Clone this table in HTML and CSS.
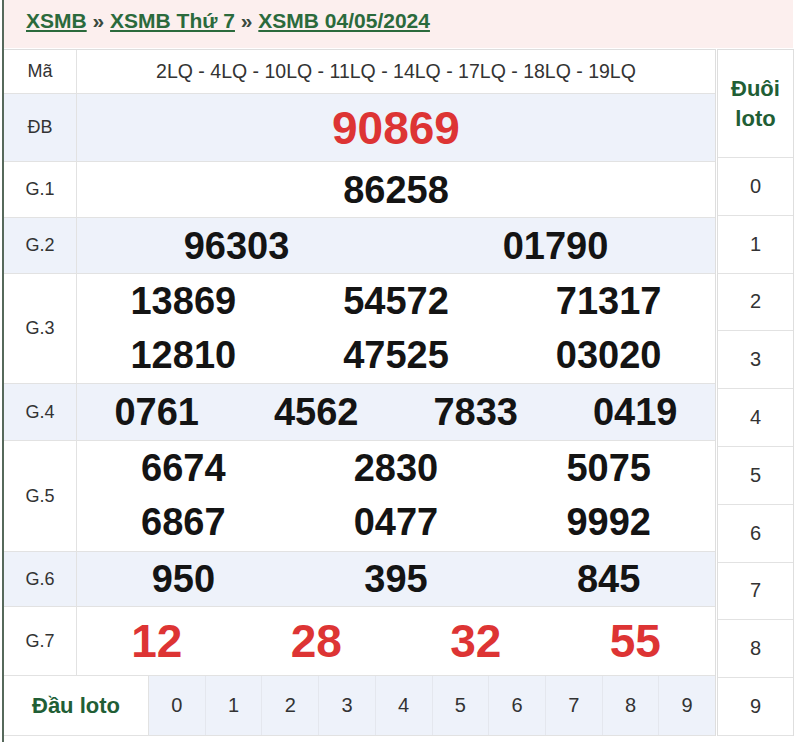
FILE: index.html
```html
<!DOCTYPE html>
<html lang="vi">
<head>
<meta charset="utf-8">
<title>XSMB 04/05/2024</title>
<link rel="stylesheet" href="styles.css">
</head>
<body>
<div class="page">
  <div class="crumb">
    <a href="#">XSMB</a> <span class="sep">»</span> <a href="#">XSMB Thứ 7</a> <span class="sep">»</span> <a href="#">XSMB 04/05/2024</a>
  </div>
  <div class="board">
    <div class="main">
      <div class="row r-ma">
        <div class="lbl">Mã</div>
        <div class="val code">2LQ - 4LQ - 10LQ - 11LQ - 14LQ - 17LQ - 18LQ - 19LQ</div>
      </div>
      <div class="row alt r-db">
        <div class="lbl">ĐB</div>
        <div class="val c1"><span class="num red">90869</span></div>
      </div>
      <div class="row r-g1">
        <div class="lbl">G.1</div>
        <div class="val c1"><span class="num">86258</span></div>
      </div>
      <div class="row alt r-g2">
        <div class="lbl">G.2</div>
        <div class="val c2"><span class="num">96303</span><span class="num">01790</span></div>
      </div>
      <div class="row r-g3">
        <div class="lbl">G.3</div>
        <div class="val c3">
          <span class="num">13869</span><span class="num">54572</span><span class="num">71317</span>
          <span class="num">12810</span><span class="num">47525</span><span class="num">03020</span>
        </div>
      </div>
      <div class="row alt r-g4">
        <div class="lbl">G.4</div>
        <div class="val c4"><span class="num">0761</span><span class="num">4562</span><span class="num">7833</span><span class="num">0419</span></div>
      </div>
      <div class="row r-g5">
        <div class="lbl">G.5</div>
        <div class="val c3">
          <span class="num">6674</span><span class="num">2830</span><span class="num">5075</span>
          <span class="num">6867</span><span class="num">0477</span><span class="num">9992</span>
        </div>
      </div>
      <div class="row alt r-g6">
        <div class="lbl">G.6</div>
        <div class="val c3"><span class="num">950</span><span class="num">395</span><span class="num">845</span></div>
      </div>
      <div class="row r-g7">
        <div class="lbl">G.7</div>
        <div class="val c4"><span class="num red">12</span><span class="num red">28</span><span class="num red">32</span><span class="num red">55</span></div>
      </div>
      <div class="row r-dau">
        <div class="dlbl">Đầu loto</div>
        <div class="dcell">0</div><div class="dcell">1</div><div class="dcell">2</div><div class="dcell">3</div><div class="dcell">4</div>
        <div class="dcell">5</div><div class="dcell">6</div><div class="dcell">7</div><div class="dcell">8</div><div class="dcell">9</div>
      </div>
    </div>
    <div class="side">
      <div class="shead">Đuôi<br>loto</div>
      <div class="scell">0</div><div class="scell">1</div><div class="scell">2</div><div class="scell">3</div><div class="scell">4</div>
      <div class="scell">5</div><div class="scell">6</div><div class="scell">7</div><div class="scell">8</div><div class="scell">9</div>
    </div>
  </div>
</div>
</body>
</html>
```
FILE: styles.css
```css
* { box-sizing: border-box; }
html, body { margin: 0; padding: 0; background: #ffffff; }
body { font-family: "Liberation Sans", Arial, sans-serif; color: #333; }

.page {
  margin-left: 2px;
  width: 792px;
  height: 742px;
  border-left: 2px solid #56695b;
}

.crumb {
  height: 48px;
  width: 789px;
  background: #fcefee;
  padding-left: 22px;
  line-height: 41px;
  font-size: 21px;
  font-weight: bold;
  white-space: nowrap;
}
.crumb a { color: #2b6a3c; text-decoration: underline; text-underline-offset: 2px; }
.crumb .sep { color: #3a4a3e; }

.board {
  margin-top: 1px;
  display: flex;
  align-items: stretch;
}

.main {
  width: 712px;
  border-top: 1px solid #dedede;
  border-right: 1px solid #dedede;
}

.row {
  display: flex;
  border-bottom: 1px solid #e2e2e2;
  background: #ffffff;
}
.row.alt { background: #eef2fa; }

.lbl {
  width: 73px;
  flex: none;
  border-right: 1px solid #e2e2e2;
  display: flex;
  align-items: center;
  justify-content: center;
  font-size: 18px;
  color: #333;
}

.val {
  flex: 1;
  display: grid;
  align-items: center;
  justify-items: center;
}
.code { font-size: 19.5px; color: #333; }
.c1 { grid-template-columns: 1fr; }
.c2 { grid-template-columns: 1fr 1fr; }
.c3 { grid-template-columns: 1fr 1fr 1fr; }
.c4 { grid-template-columns: 1fr 1fr 1fr 1fr; }

.num {
  font-size: 38px;
  font-weight: bold;
  color: #141414;
  line-height: 1;
}
.num.red { color: #dd3434; font-size: 46px; }

.r-ma { height: 44px; }
.r-db { height: 68px; }
.r-g1 { height: 56px; }
.r-g2 { height: 56px; }
.r-g3 { height: 110px; }
.r-g4 { height: 57px; }
.r-g5 { height: 111px; }
.r-g6 { height: 55px; }
.r-g7 { height: 69px; }
.r-dau { height: 60px; }

.r-g3 .val, .r-g5 .val { grid-template-rows: 54px 54px; }

.dlbl {
  width: 145px;
  flex: none;
  border-right: 1px solid #e2e2e2;
  display: flex;
  align-items: center;
  justify-content: center;
  font-size: 22px;
  font-weight: bold;
  color: #215e35;
}
.dcell {
  flex: 1;
  background: #eef2fa;
  border-right: 1px solid #e4e7ee;
  display: flex;
  align-items: center;
  justify-content: center;
  font-size: 20px;
  color: #333;
}
.dcell:last-child { border-right: none; }

.side {
  width: 77px;
  margin-left: 1px;
  display: flex;
  flex-direction: column;
  border-top: 1px solid #dedede;
  border-left: 1px solid #dedede;
  border-right: 1px solid #dedede;
}
.shead {
  height: 108px;
  flex: none;
  display: flex;
  align-items: center;
  justify-content: center;
  text-align: center;
  font-size: 22px;
  line-height: 30px;
  font-weight: bold;
  color: #215e35;
  border-bottom: 1px solid #e2e2e2;
}
.scell {
  flex: 1;
  display: flex;
  align-items: center;
  justify-content: center;
  font-size: 20px;
  color: #333;
  border-bottom: 1px solid #e2e2e2;
}
```
